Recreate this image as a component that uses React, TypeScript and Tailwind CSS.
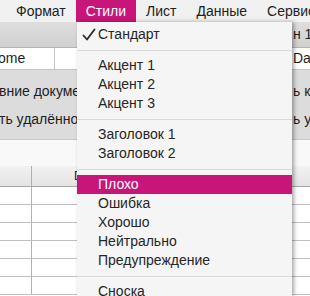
import { Fragment } from 'react';

const menuBar = ['Формат', 'Стили', 'Лист', 'Данные', 'Сервис'];

type Entry = { label: string; checked?: boolean; active?: boolean } | 'sep';

const entries: Entry[] = [
  { label: 'Стандарт', checked: true },
  'sep',
  { label: 'Акцент 1' },
  { label: 'Акцент 2' },
  { label: 'Акцент 3' },
  'sep',
  { label: 'Заголовок 1' },
  { label: 'Заголовок 2' },
  'sep',
  { label: 'Плохо', active: true },
  { label: 'Ошибка' },
  { label: 'Хорошо' },
  { label: 'Нейтрально' },
  { label: 'Предупреждение' },
  'sep',
  { label: 'Сноска' },
];

function Check() {
  return (
    <svg width="14" height="14" viewBox="0 0 14 14" className="shrink-0">
      <path d="M1.5 7.5 L5 11.5 L12.5 1.5" fill="none" stroke="#2a2a2a" strokeWidth="1.8" strokeLinecap="round" strokeLinejoin="round" />
    </svg>
  );
}

export default function App() {
  return (
    <div className="relative w-[310px] h-[296px] overflow-hidden bg-white text-[14px] text-[#1e1e1e] font-['Liberation_Sans',Arial,sans-serif]">
      {/* Menu bar */}
      <div className="h-[22px] flex items-stretch pl-[6px] bg-[#f1f1f1] whitespace-nowrap">
        {menuBar.map((item) => (
          <div
            key={item}
            className={`px-[10px] flex items-center ${item === 'Стили' ? 'bg-[#c8157a] text-white' : 'text-[#222]'}`}
          >
            {item}
          </div>
        ))}
      </div>

      {/* Toolbar strip */}
      <div className="h-[26px] flex items-center justify-end bg-gradient-to-b from-[#dedede] to-[#d0d0d0] border-b border-[#b4b4b4]">
        <span className="w-[17px] overflow-hidden whitespace-nowrap">н 1</span>
      </div>

      {/* Formula row */}
      <div className="h-[22px] flex items-center bg-white border-b border-[#c4c4c4]">
        <div className="w-[55px] h-full flex items-center border-r border-[#c4c4c4] overflow-hidden">
          <span className="ml-[-2px]">ome</span>
        </div>
        <div className="flex-1" />
        <span className="w-[17px] overflow-hidden whitespace-nowrap">Dat</span>
      </div>

      {/* Notification area */}
      <div className="h-[70px] flex flex-col pt-[12px] gap-[10px] bg-[#dcdcdc] border-b border-[#c8c8c8]">
        <div className="flex justify-between whitespace-nowrap leading-[18px]">
          <span className="ml-[-1px]">вние документов</span>
          <span className="w-[17px] overflow-hidden">ь как</span>
        </div>
        <div className="flex justify-between whitespace-nowrap leading-[18px]">
          <span className="ml-[-1px]">ть удалённо</span>
          <span className="w-[17px] overflow-hidden">ь уд</span>
        </div>
      </div>

      {/* Empty band */}
      <div className="h-[26px] bg-[#f9f9f9]" />

      {/* Column headers */}
      <div className="h-[21px] flex bg-gradient-to-b from-[#f2f2f2] to-[#e4e4e4] border-b border-[#a8a8a8]">
        <div className="w-[32px] border-r border-[#b0b0b0]" />
        <div className="flex-1 flex items-center pl-[42px] text-[12px]">D</div>
      </div>

      {/* Grid rows */}
      {[0, 1, 2, 3, 4, 5].map((r) => (
        <div key={r} className="h-[18px] flex border-b border-[#c0c0c0]">
          <div className="w-[32px] border-r border-[#b0b0b0]" />
          <div className="flex-1" />
        </div>
      ))}

      {/* Dropdown */}
      <div className="absolute left-[77px] top-[22px] bottom-0 w-[215px] bg-[#f5f5f5] pt-[3px] shadow-[2px_0_4px_rgba(0,0,0,0.35)] whitespace-nowrap">
        {entries.map((e, i) =>
          e === 'sep' ? (
            <div key={i} className="h-[12px] flex items-center">
              <div className="w-full h-px bg-[#d9d9d9]" />
            </div>
          ) : (
            <Fragment key={i}>
              <div
                className={`h-[19px] flex items-center relative pl-[21px] ${e.active ? 'bg-[#c8157a] text-white' : 'text-[#262626]'}`}
              >
                {e.checked && (
                  <span className="absolute left-[5px] top-[3px]">
                    <Check />
                  </span>
                )}
                {e.label}
              </div>
            </Fragment>
          ),
        )}
      </div>
    </div>
  );
}
